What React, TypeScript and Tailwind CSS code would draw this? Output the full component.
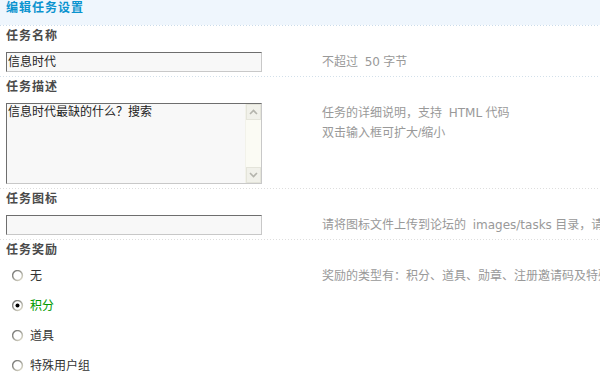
import React from "react";

const font = { fontFamily: '"Liberation Sans", "Noto Sans CJK SC", sans-serif' };
const latin = { fontFamily: '"DejaVu Sans", "Noto Sans CJK SC", sans-serif' };

function Sep({ color = "#cfdce8" }: { color?: string }) {
  return (
    <div
      className="h-[1px] w-full"
      style={{ backgroundImage: `linear-gradient(to right, ${color} 1px, transparent 1px)`, backgroundSize: "3px 1px" }}
    />
  );
}

function Label({ children }: { children: React.ReactNode }) {
  return (
    <div className="h-[20px] pl-[6px] text-[12px] leading-[20px] font-bold tracking-[1px] text-[#4a4a4a] whitespace-nowrap">
      {children}
    </div>
  );
}

function Radio({ checked }: { checked?: boolean }) {
  return (
    <svg width="12" height="12" viewBox="0 0 12 12" className="shrink-0">
      <defs>
        <linearGradient id={checked ? "rg1" : "rg0"} x1="0" y1="0" x2="1" y2="1">
          <stop offset="0" stopColor="#707070" />
          <stop offset="0.5" stopColor="#a0a098" />
          <stop offset="1" stopColor="#e6e2d0" />
        </linearGradient>
      </defs>
      <circle cx="5.5" cy="5.5" r="4.9" fill="#fff" stroke={`url(#${checked ? "rg1" : "rg0"})`} strokeWidth="1.5" />
      {checked && <circle cx="5.5" cy="5.5" r="2" fill="#000" />}
    </svg>
  );
}

function Chevron({ up }: { up?: boolean }) {
  return (
    <svg width="9" height="6" viewBox="0 0 9 6">
      <path d={up ? "M1 5 L4.5 1.5 L8 5" : "M1 1 L4.5 4.5 L8 1"} fill="none" stroke="#b4b4ac" strokeWidth="1.6" />
    </svg>
  );
}

export default function App() {
  return (
    <div className="w-[600px] h-[386px] overflow-hidden bg-white text-[12px]" style={font}>
      <div className="h-[25px] bg-[#eff6fd] pl-[6px] text-[12px] leading-[17px] font-bold tracking-[1px] text-[#0a93cf]">
        编辑任务设置
      </div>
      <Sep color="#cadbea" />

      <Label>任务名称</Label>
      <div className="mt-[6px] flex pl-[6px]">
        <div className="w-[256px] h-[20px] shrink-0 border border-t-[#6e6e6e] border-l-[#6e6e6e] border-r-[#c8c8c8] border-b-[#c8c8c8] bg-[#f8f8f8] pl-[1px] leading-[18px] text-[#222]">
          信息时代
        </div>
        <div className="ml-[60px] leading-[20px] text-[#999] whitespace-nowrap">
          不超过&nbsp;&nbsp;<span style={latin}>50</span> 字节
        </div>
      </div>
      <div className="h-[4px]" />
      <Sep color="#d3e0ea" />

      <Label>任务描述</Label>
      <div className="mt-[6px] flex pl-[6px]">
        <div className="w-[256px] h-[81px] shrink-0 flex border border-t-[#6e6e6e] border-l-[#6e6e6e] border-r-[#c8c8c8] border-b-[#c8c8c8] bg-[#f8f8f8]">
          <div className="flex-1 pl-[1px] pt-[1px] leading-[14px] text-[#222]">信息时代最缺的什么？搜索</div>
          <div className="w-[16px] flex flex-col bg-[#fbfbf4] border-l border-[#f2f2ea]">
            <div className="h-[16px] flex items-center justify-center bg-[#f1f1ea] border border-[#e4e4da]">
              <Chevron up />
            </div>
            <div className="flex-1" />
            <div className="h-[16px] flex items-center justify-center bg-[#f1f1ea] border border-[#e4e4da]">
              <Chevron />
            </div>
          </div>
        </div>
        <div className="ml-[60px] leading-[20px] text-[#999] whitespace-nowrap">
          <div>任务的详细说明，支持&nbsp;&nbsp;<span style={latin}>HTML</span> 代码</div>
          <div>双击输入框可扩大/缩小</div>
        </div>
      </div>
      <div className="h-[4px]" />
      <Sep color="#dedede" />

      <Label>任务图标</Label>
      <div className="mt-[6px] flex pl-[6px]">
        <div className="w-[256px] h-[20px] shrink-0 border border-t-[#6e6e6e] border-l-[#6e6e6e] border-r-[#c8c8c8] border-b-[#c8c8c8] bg-[#f8f8f8]" />
        <div className="ml-[60px] leading-[20px] text-[#999] whitespace-nowrap">
          请将图标文件上传到论坛的&nbsp;&nbsp;<span style={latin}>images/tasks</span> 目录，请在此输入图标文件名
        </div>
      </div>
      <div className="h-[4px]" />
      <Sep color="#dedede" />

      <Label>任务奖励</Label>
      <div className="mt-[1px] flex">
        <div className="w-[322px] shrink-0 flex flex-col">
          {[
            { t: "无" },
            { t: "积分", c: true },
            { t: "道具" },
            { t: "特殊用户组" },
          ].map((r) => (
            <div key={r.t} className="h-[30px] flex items-center pl-[12px]">
              <Radio checked={r.c} />
              <span className={`ml-[6px] leading-[14px] ${r.c ? "text-[#009900]" : "text-[#333]"}`}>{r.t}</span>
            </div>
          ))}
        </div>
        <div className="leading-[30px] text-[#999] whitespace-nowrap">
          奖励的类型有：积分、道具、勋章、注册邀请码及特殊用户组
        </div>
      </div>
    </div>
  );
}
